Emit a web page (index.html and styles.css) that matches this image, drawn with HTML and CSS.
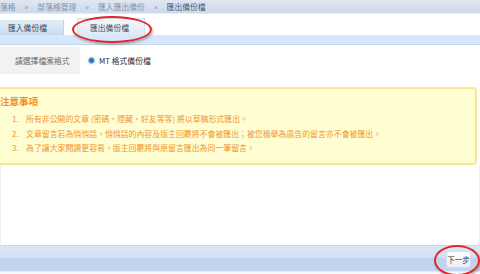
FILE: index.html
```html
<!DOCTYPE html>
<html>
<head>
<meta charset="utf-8">
<link rel="stylesheet" href="styles.css">
</head>
<body>
<div class="page">
  <div class="crumb">
    <span>落格</span><span class="sep">»</span><span>部落格管理</span><span class="sep">»</span><span>匯入匯出備份</span><span class="sep">»</span><span class="cur">匯出備份檔</span>
  </div>
  <div class="tabs">
    <div class="tab">匯入備份檔</div>
    <div class="tab active">匯出備份檔<span class="ring ring-tab"></span></div>
  </div>
  <div class="strip"></div>
  <div class="formrow">
    <div class="label">請選擇檔案格式</div>
    <div class="value"><span class="radio"></span>MT 格式備份檔</div>
  </div>
  <div class="notice">
    <div class="ntitle">注意事項</div>
    <ul class="nlist">
      <li><span class="num">1.</span>所有非公開的文章 (密碼・隱藏・好友等等) 將以草稿形式匯出。</li>
      <li><span class="num">2.</span>文章留言若為悄悄話，悄悄話的內容及版主回覆將不會被匯出；被您檢舉為廣告的留言亦不會被匯出。</li>
      <li><span class="num">3.</span>為了讓大家閱讀更容易，版主回覆將與原留言匯出為同一筆留言。</li>
    </ul>
  </div>
  <div class="fill"></div>
  <div class="footer">
    <div class="btn">下一步<span class="ring ring-btn"></span></div>
  </div>
</div>
</body>
</html>
```

FILE: styles.css
```css
html, body {
  margin: 0;
  padding: 0;
  background: #ffffff;
}
.page {
  width: 480px;
  height: 274px;
  overflow: hidden;
  display: flex;
  flex-direction: column;
  font-family: "Noto Sans CJK TC", "Noto Sans", sans-serif;
}
.crumb {
  height: 14px;
  flex: none;
  background: linear-gradient(#dfe7f2, #cddaeb);
  border-bottom: 1px solid #e6edf6;
  box-sizing: border-box;
  font-size: 7.8px;
  line-height: 13px;
  color: #8493a8;
  display: flex;
  gap: 9px;
  white-space: nowrap;
}
.crumb .cur {
  color: #4a5a70;
}
.crumb .sep {
  color: #8a98ac;
}
.tabs {
  height: 21px;
  flex: none;
  display: flex;
  align-items: flex-end;
  gap: 13px;
}
.tab {
  position: relative;
  width: 64px;
  height: 15px;
  box-sizing: border-box;
  padding-left: 8px;
  font-size: 7.8px;
  line-height: 15px;
  color: #3c4c62;
  background: linear-gradient(#e2edf8, #c8dcf1);
  border-right: 1px solid #bfd3ea;
}
.tab.active {
  width: 68px;
  height: 17px;
  line-height: 17px;
  padding-left: 12px;
  background: linear-gradient(#f2f7fc, #dfeaf6);
  border: 1px solid #d2e0ef;
  border-bottom: none;
}
.ring {
  position: absolute;
  border: 2px solid #e3262c;
  border-radius: 50%;
  box-shadow: 1px 2px 2px rgba(120, 120, 120, 0.5);
  pointer-events: none;
}
.ring-tab {
  left: -6px;
  top: -3px;
  width: 76px;
  height: 23px;
}
.strip {
  height: 10px;
  flex: none;
  background: #d5e7fa;
  border-bottom: 1px solid #c2d8ee;
  box-sizing: border-box;
}
.formrow {
  margin-top: 2px;
  height: 27px;
  flex: none;
  display: flex;
  align-items: stretch;
  font-size: 7.8px;
}
.label {
  width: 80px;
  background: #f2f2f2;
  color: #6a6a6a;
  padding-left: 15px;
  box-sizing: border-box;
  display: flex;
  align-items: center;
}
.value {
  display: flex;
  align-items: center;
  padding-left: 8px;
  color: #2c2c2c;
  gap: 4px;
}
.radio {
  width: 5px;
  height: 5px;
  border-radius: 50%;
  background: #2d6fb8;
  border: 1px solid #b9cde3;
  box-shadow: 0 0 0 1px #eef3f9;
}
.notice {
  margin-top: 13px;
  margin-left: -6px;
  margin-right: 3px;
  height: 78px;
  flex: none;
  box-sizing: border-box;
  background: #fffdd2;
  border: 2px solid #fbe692;
  border-radius: 4px;
  color: #f0952e;
}
.ntitle {
  font-size: 9.5px;
  font-weight: bold;
  color: #f2901f;
  margin-top: 6px;
  padding-left: 4px;
  line-height: 12px;
}
.nlist {
  list-style: none;
  margin: 5px 0 0 0;
  padding-left: 16px;
  font-size: 7.9px;
  line-height: 14.5px;
  white-space: nowrap;
}
.nlist li {
  display: flex;
}
.num {
  width: 14px;
  flex: none;
}
.fill {
  flex: 1;
  border-left: 1px solid #eef2f6;
  border-right: 1px solid #eef2f6;
}
.footer {
  height: 29px;
  flex: none;
  box-sizing: border-box;
  background: linear-gradient(#dbe7f5 0, #d3e2f3 40%, #bfd3ee 45%, #c3d6ef 88%, #eef3f9 92%, #ffffff 100%);
  border-top: 1px solid #c6d7ec;
  display: flex;
  justify-content: flex-end;
  align-items: flex-start;
  padding-right: 9px;
  padding-top: 5px;
}
.btn {
  position: relative;
  width: 25px;
  height: 17px;
  box-sizing: border-box;
  background: linear-gradient(#ffffff, #eaeef3);
  border: 1px solid #d5dce5;
  border-radius: 3px;
  font-size: 7.5px;
  line-height: 15px;
  text-align: center;
  color: #333333;
}
.ring-btn {
  left: -13px;
  top: -7px;
  width: 42px;
  height: 27px;
}
```
